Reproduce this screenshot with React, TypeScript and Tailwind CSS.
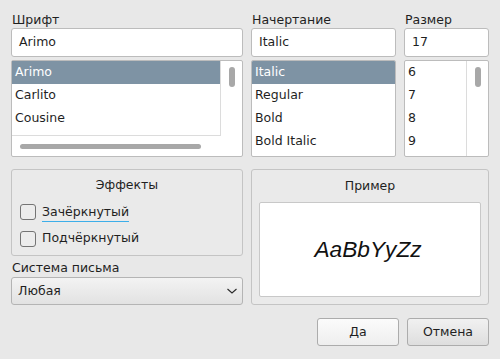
import React from "react";

const font = { fontFamily: '"DejaVu Sans", sans-serif' };

function VThumb() {
  return <div className="w-[6px] h-[20px] rounded-[3px] bg-[#a8a8a8]" />;
}

export default function App() {
  return (
    <div
      className="w-[500px] h-[359px] bg-[#e8e8e8] text-[#1f1f1f] text-[12.5px] px-[11px] pt-[12px] flex flex-col"
      style={font}
    >
      {/* top section */}
      <div className="flex gap-[8px]">
        {/* font */}
        <div className="w-[232px] flex flex-col">
          <div className="h-[16px] leading-[16px] pl-[1px]">Шрифт</div>
          <div className="h-[29px] bg-white border border-[#bcbcbc] rounded-[3px] flex items-center pl-[7px]">Arimo</div>
          <div className="mt-[3px] h-[97px] bg-white border border-[#bcbcbc] rounded-[2px] flex flex-col">
            <div className="flex h-[74px]">
              <div className="w-[209px] border-r border-[#dcdcdc] flex flex-col">
                <div className="h-[23px] bg-[#7e93a4] text-white flex items-center pl-[3px]">Arimo</div>
                <div className="h-[23px] flex items-center pl-[3px]">Carlito</div>
                <div className="h-[23px] flex items-center pl-[3px]">Cousine</div>
              </div>
              <div className="flex-1 flex justify-center pt-[6px]">
                <VThumb />
              </div>
            </div>
            <div className="flex-1 flex">
              <div className="w-[209px] border-t border-[#dcdcdc] flex items-center pl-[8px]">
                <div className="w-[181px] h-[5px] rounded-[3px] bg-[#a8a8a8]" />
              </div>
            </div>
          </div>
        </div>
        {/* style */}
        <div className="w-[145px] flex flex-col">
          <div className="h-[16px] leading-[16px] pl-[1px]">Начертание</div>
          <div className="h-[29px] bg-white border border-[#bcbcbc] rounded-[3px] flex items-center pl-[7px]">Italic</div>
          <div className="mt-[3px] h-[97px] bg-white border border-[#bcbcbc] rounded-[2px] flex flex-col overflow-hidden">
            <div className="h-[23px] bg-[#7e93a4] text-white flex items-center pl-[3px]">Italic</div>
            <div className="h-[23px] flex items-center pl-[3px]">Regular</div>
            <div className="h-[23px] flex items-center pl-[3px]">Bold</div>
            <div className="h-[23px] flex items-center pl-[3px]">Bold Italic</div>
          </div>
        </div>
        {/* size */}
        <div className="w-[85px] flex flex-col">
          <div className="h-[16px] leading-[16px] pl-[1px]">Размер</div>
          <div className="h-[29px] bg-white border border-[#bcbcbc] rounded-[3px] flex items-center pl-[7px]">17</div>
          <div className="mt-[3px] h-[97px] bg-white border border-[#bcbcbc] rounded-[2px] flex overflow-hidden">
            <div className="w-[62px] border-r border-[#dcdcdc] flex flex-col">
              <div className="h-[23px] flex items-center pl-[3px]">6</div>
              <div className="h-[23px] flex items-center pl-[3px]">7</div>
              <div className="h-[23px] flex items-center pl-[3px]">8</div>
              <div className="h-[23px] flex items-center pl-[3px]">9</div>
            </div>
            <div className="flex-1 flex justify-center pt-[6px]">
              <VThumb />
            </div>
          </div>
        </div>
      </div>

      {/* bottom section */}
      <div className="mt-[12px] flex gap-[8px]">
        <div className="w-[232px] flex flex-col">
          <div className="h-[87px] border border-[#c4c4c4] rounded-[3px] bg-[#eaeaea] flex flex-col">
            <div className="h-[28px] flex items-center justify-center pt-[2px]">Эффекты</div>
            <div className="flex items-center h-[27px] pl-[8px]">
              <div className="w-[16px] h-[16px] rounded-[3px] border border-[#747474] bg-[#ececec]" />
              <span className="ml-[6px] border-b border-[#3daee9] leading-[16px] pb-[1px] mt-[2px]">Зачёркнутый</span>
            </div>
            <div className="flex items-center h-[27px] pl-[8px]">
              <div className="w-[16px] h-[16px] rounded-[3px] border border-[#747474] bg-[#ececec]" />
              <span className="ml-[6px]">Подчёркнутый</span>
            </div>
          </div>
          <div className="mt-[4px] h-[16px] leading-[16px] pl-[1px]">Система письма</div>
          <div className="mt-[1px] h-[28px] border border-[#b4b4b4] rounded-[3px] bg-gradient-to-b from-[#f3f3f3] to-[#e2e2e2] flex items-center justify-between pl-[6px] pr-[4px]">
            <span>Любая</span>
            <svg width="12" height="8" viewBox="0 0 12 8">
              <path d="M1.5 2 L6 6 L10.5 2" fill="none" stroke="#2a2a2a" strokeWidth="1.1" />
            </svg>
          </div>
        </div>
        <div className="w-[238px] h-[136px] border border-[#c4c4c4] rounded-[3px] bg-[#eaeaea] flex flex-col px-[7px] pb-[7px]">
          <div className="h-[32px] flex items-center justify-center pt-[1px]">Пример</div>
          <div className="flex-1 bg-white border border-[#c8c8c8] rounded-[2px] flex items-center justify-center">
            <span
              className="italic text-[22.7px] text-[#111] mr-[4px]"
              style={{ fontFamily: '"Liberation Sans", Arimo, sans-serif' }}
            >
              AaBbYyZz
            </span>
          </div>
        </div>
      </div>

      {/* buttons */}
      <div className="mt-[13px] flex justify-end gap-[8px]">
        <div className="w-[82px] h-[28px] border border-[#acacac] rounded-[3px] bg-gradient-to-b from-[#fbfbfb] to-[#eeeeee] flex items-center justify-center">
          Да
        </div>
        <div className="w-[82px] h-[28px] border border-[#acacac] rounded-[3px] bg-gradient-to-b from-[#f1f1f1] to-[#dedede] flex items-center justify-center">
          Отмена
        </div>
      </div>
    </div>
  );
}
